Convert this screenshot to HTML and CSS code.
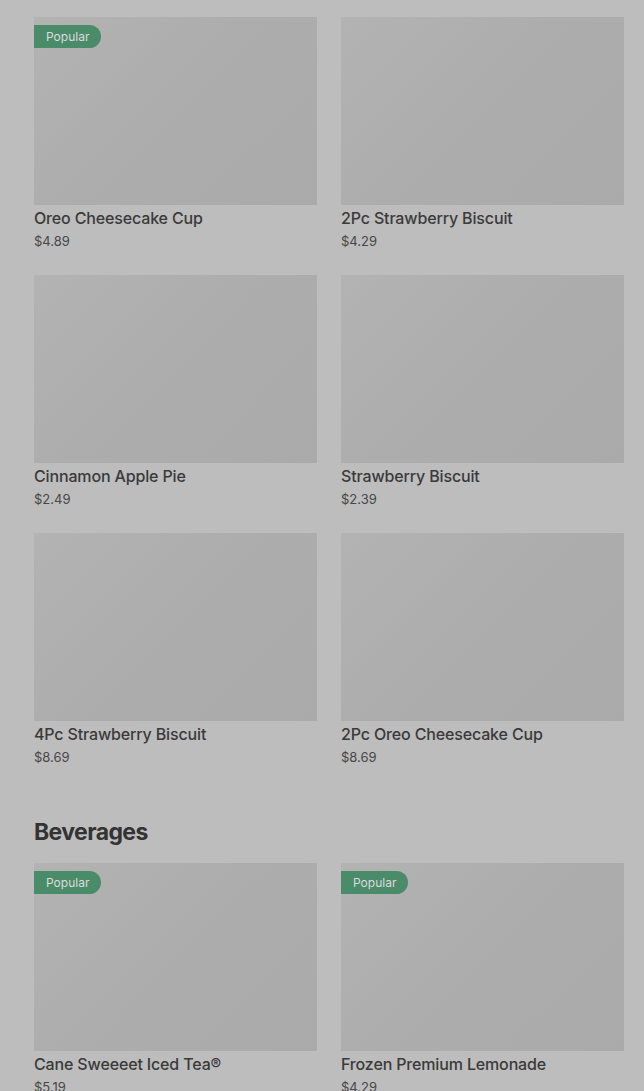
FILE: index.html
```html
<!DOCTYPE html>
<html lang="en">
<head>
  <meta charset="UTF-8">
  <meta name="viewport" content="width=device-width, initial-scale=1.0">
  <title>Menu</title>
  <link rel="stylesheet" href="styles.css">
</head>
<body>
  <div class="menu">
    <section class="menu-section">
      <div class="item-grid">
        <div class="item">
          <div class="item-img"><span class="badge">Popular</span></div>
          <div class="item-name">Oreo Cheesecake Cup</div>
          <div class="item-price">$4.89</div>
        </div>
        <div class="item">
          <div class="item-img"></div>
          <div class="item-name">2Pc Strawberry Biscuit</div>
          <div class="item-price">$4.29</div>
        </div>
        <div class="item">
          <div class="item-img"></div>
          <div class="item-name">Cinnamon Apple Pie</div>
          <div class="item-price">$2.49</div>
        </div>
        <div class="item">
          <div class="item-img"></div>
          <div class="item-name">Strawberry Biscuit</div>
          <div class="item-price">$2.39</div>
        </div>
        <div class="item">
          <div class="item-img"></div>
          <div class="item-name">4Pc Strawberry Biscuit</div>
          <div class="item-price">$8.69</div>
        </div>
        <div class="item">
          <div class="item-img"></div>
          <div class="item-name">2Pc Oreo Cheesecake Cup</div>
          <div class="item-price">$8.69</div>
        </div>
      </div>
    </section>

    <section class="menu-section">
      <h2 class="section-title">Beverages</h2>
      <div class="item-grid">
        <div class="item">
          <div class="item-img"><span class="badge">Popular</span></div>
          <div class="item-name">Cane Sweeeet Iced Tea®</div>
          <div class="item-price">$5.19</div>
        </div>
        <div class="item">
          <div class="item-img"><span class="badge">Popular</span></div>
          <div class="item-name">Frozen Premium Lemonade</div>
          <div class="item-price">$4.29</div>
        </div>
      </div>
    </section>
  </div>
</body>
</html>
```

FILE: styles.css
```css
* {
  box-sizing: border-box;
}

body {
  margin: 0;
  font-family: Inter, "Noto Sans", Arial, sans-serif;
  background: #bdbdbd;
  color: #383838;
  overflow: hidden;
}

.menu {
  padding: 17px 20px 0 34px;
}

.item-grid {
  display: grid;
  grid-template-columns: 283px 283px;
  column-gap: 24px;
  row-gap: 25px;
}

.item-img {
  position: relative;
  height: 188px;
  background: linear-gradient(135deg, #b3b3b3 0%, #adadad 45%, #aaaaaa 100%);
}

.badge {
  position: absolute;
  top: 8px;
  left: 0;
  height: 23px;
  padding: 0 12px;
  line-height: 23px;
  font-size: 12px;
  color: #dcdcdc;
  background: #4a8b69;
  border-radius: 0 12px 12px 0;
}

.item-name {
  margin-top: 2px;
  font-size: 16px;
  line-height: 22px;
  font-weight: 500;
  letter-spacing: -0.15px;
  color: #3a3a3a;
}

.item-price {
  margin-top: 3px;
  font-size: 13px;
  line-height: 18px;
  color: #474747;
}

.section-title {
  margin: 52px 0 17px;
  font-size: 23px;
  line-height: 28px;
  font-weight: 700;
  letter-spacing: -0.6px;
  color: #333;
}
```
